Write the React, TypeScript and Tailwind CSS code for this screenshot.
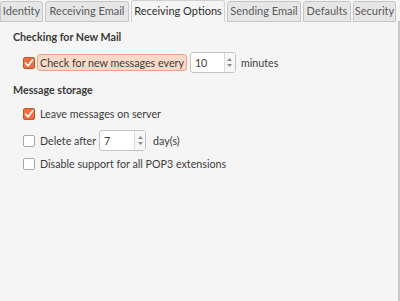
import React from 'react';

const tabs = [
  { label: 'Identity', width: 'w-[43px]' },
  { label: 'Receiving Email', width: 'w-[84px]' },
  { label: 'Receiving Options', width: 'w-[94px]', active: true },
  { label: 'Sending Email', width: 'w-[74px]' },
  { label: 'Defaults', width: 'w-[48px]' },
  { label: 'Security', width: 'w-[43px]' },
];

function CheckBox({ checked }: { checked?: boolean }) {
  if (checked) {
    return (
      <span className="flex h-[12px] w-[12px] shrink-0 items-center justify-center rounded-[2px] border border-[#c9541f] bg-[#ec7142]">
        <svg width="10" height="10" viewBox="0 0 10 10">
          <path d="M1.5 5.2 L4 7.8 L8.8 1.8" fill="none" stroke="#fff" strokeWidth="1.6" strokeLinecap="round" strokeLinejoin="round" />
        </svg>
      </span>
    );
  }
  return <span className="h-[12px] w-[12px] shrink-0 rounded-[2px] border border-[#a8a8a8] bg-white" />;
}

function SpinBox({ value, width }: { value: string; width: string }) {
  return (
    <div className={`flex h-[21px] ${width} items-stretch rounded-[3px] border border-[#c4c4c4] bg-white`}>
      <div className="flex flex-1 items-center pl-[4px] text-[#3c3c3c]">{value}</div>
      <div className="flex w-[11px] flex-col items-center justify-center gap-[3px] border-l border-[#dcdcdc] bg-[#f7f7f7]">
        <svg width="5" height="3" viewBox="0 0 5 3"><path d="M0 3 L2.5 0 L5 3 Z" fill="#8a8a8a" /></svg>
        <svg width="5" height="3" viewBox="0 0 5 3"><path d="M0 0 L2.5 3 L5 0 Z" fill="#8a8a8a" /></svg>
      </div>
    </div>
  );
}

export default function App() {
  return (
    <div className="flex h-[301px] w-[400px] flex-col overflow-hidden bg-[#f5f5f5] text-[10.7px] text-[#3c3c3c] [font-family:Lato,'Liberation_Sans',sans-serif]">
      {/* tab strip */}
      <div className="flex h-[22px] shrink-0 items-end gap-[2px] text-[11px]">
        {tabs.map((t) =>
          t.active ? (
            <div
              key={t.label}
              className={`${t.width} flex h-[22px] items-center justify-center rounded-t-[3px] border border-b-0 border-[#d0d0d0] bg-[#f5f5f5] text-[#2e2e2e]`}
            >
              {t.label}
            </div>
          ) : (
            <div
              key={t.label}
              className={`${t.width} flex h-[21px] items-center justify-center rounded-t-[3px] border border-[#c6c6c6] bg-[#e6e6e6] text-[#5a5a5a]`}
            >
              {t.label}
            </div>
          )
        )}
        <div className="h-[1px] flex-1 bg-[#c6c6c6]" />
      </div>

      {/* page */}
      <div className="flex flex-1 border-r-2 border-[#c8c8c8]">
        <div className="flex flex-1 flex-col px-[13px] pt-[7px]">
          <div className="font-bold text-[#3a3a3a]">Checking for New Mail</div>
          <div className="mt-[7px] flex items-center pl-[10px]">
            <CheckBox checked />
            <span className="ml-[2px] flex h-[17px] items-center rounded-[3px] border border-[#f2a27e] bg-[#fbd9c9] px-[2px]">
              Check for new messages every
            </span>
            <span className="ml-[3px]"><SpinBox value="10" width="w-[46px]" /></span>
            <span className="ml-[5px]">minutes</span>
          </div>

          <div className="mt-[9px] font-bold text-[#3a3a3a]">Message storage</div>
          <div className="mt-[8px] flex items-center pl-[10px]">
            <CheckBox checked />
            <span className="ml-[5px]">Leave messages on server</span>
          </div>
          <div className="mt-[8px] flex items-center pl-[10px]">
            <CheckBox />
            <span className="ml-[5px]">Delete after</span>
            <span className="ml-[3px]"><SpinBox value="7" width="w-[47px]" /></span>
            <span className="ml-[7px]">day(s)</span>
          </div>
          <div className="mt-[5px] flex items-center pl-[10px]">
            <CheckBox />
            <span className="ml-[5px]">Disable support for all POP3 extensions</span>
          </div>
        </div>
      </div>
    </div>
  );
}
